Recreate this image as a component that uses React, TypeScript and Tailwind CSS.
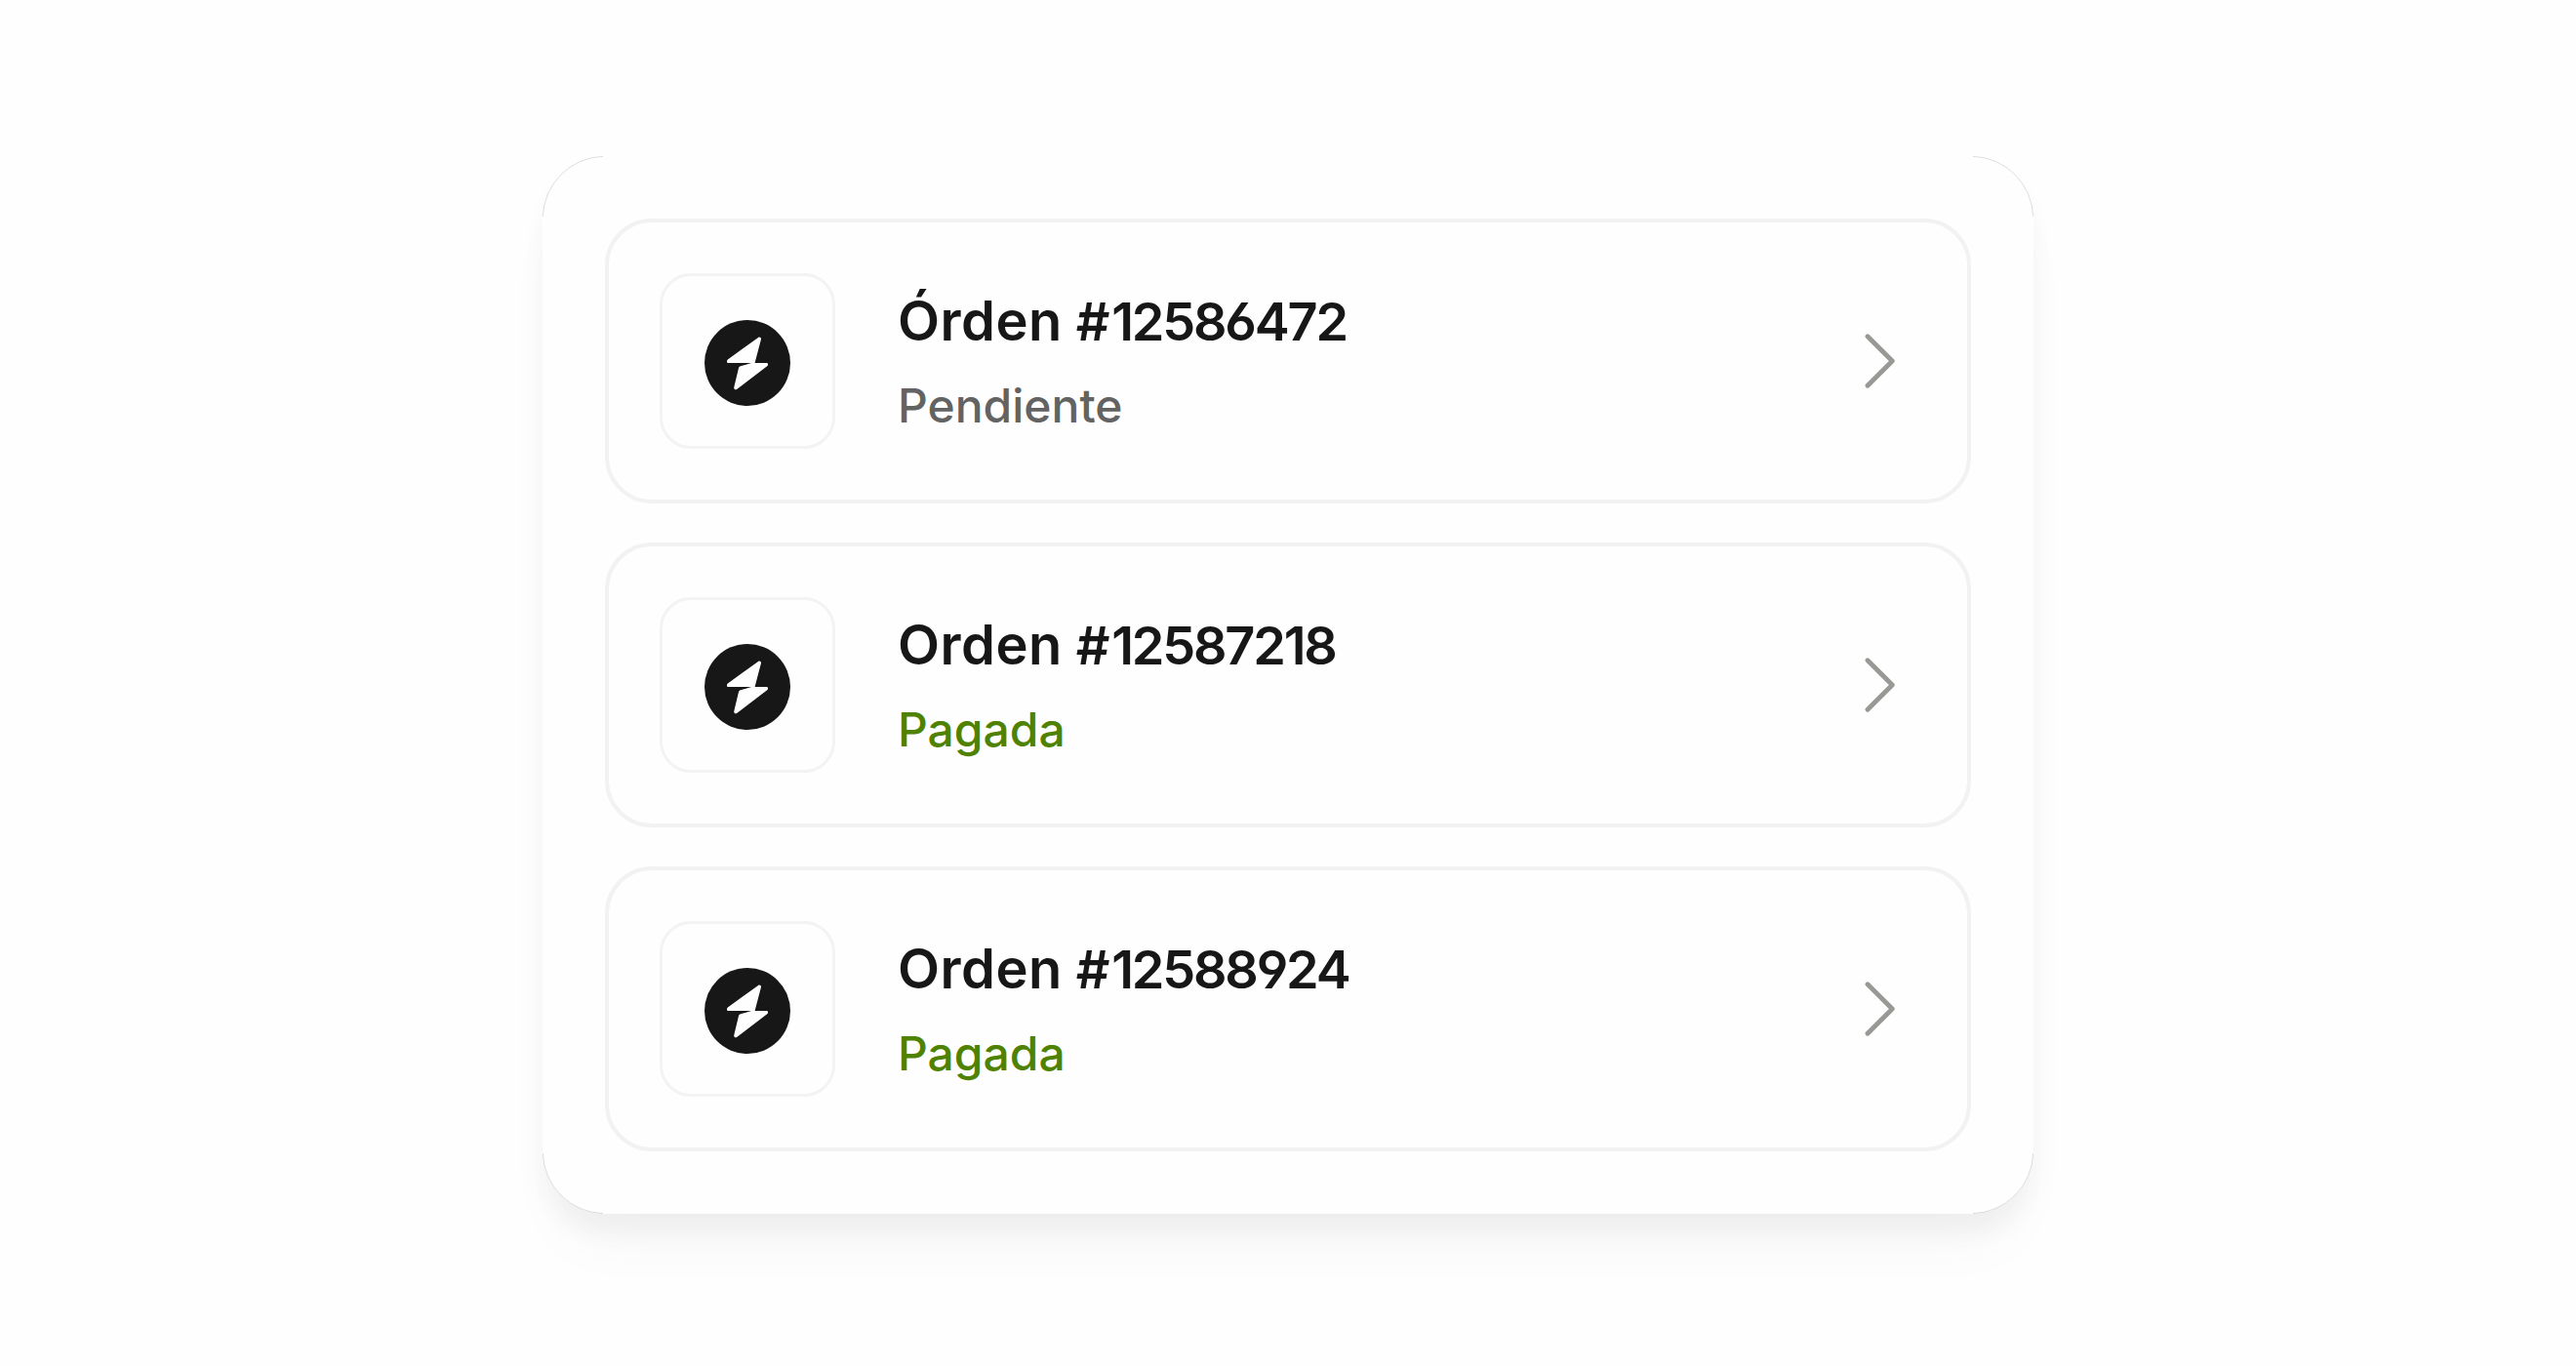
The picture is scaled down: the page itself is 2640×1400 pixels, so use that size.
const orders = [
  { id: "12586472", label: "Órden", status: "Pendiente", paid: false },
  { id: "12587218", label: "Orden", status: "Pagada", paid: true },
  { id: "12588924", label: "Orden", status: "Pagada", paid: true },
];

const BoltLogo = () => (
  <svg viewBox="0 0 88 88" className="mt-1 size-[88px]" fill="none">
    <circle cx="44" cy="44" r="44" fill="#171717" />
    <path
      d="M55 17.9C56.6 16.8 58.4 17.9 57.9 20L51.6 44H64C65.3 44.2 65.5 46.2 64.2 47.3L33.4 70.7C31.6 72 29.8 70.8 30.3 68.7L34.9 49.6C35.2 48.3 35.8 47.7 37 47.3L48 44H24.4C22.7 44 22.5 41.6 23.8 40.6Z"
      fill="#fefefe"
    />
  </svg>
);

const Chevron = () => (
  <svg viewBox="0 0 32 60" className="mr-[22px] h-[60px] w-8" fill="none">
    <path d="M4 4.7L29.3 30L4 55.3" stroke="#979995" strokeWidth="4.8" strokeLinecap="round" strokeLinejoin="round" />
  </svg>
);

// Hairline that follows one rounded corner of the panel
const Corner = ({ className }: { className: string }) => (
  <svg viewBox="0 0 64 64" className={`absolute size-16 ${className}`} fill="none">
    <path d="M0.3 62A63.7 63.7 0 0 1 62 0.3" stroke="#000" strokeOpacity="0.22" strokeWidth="0.6" />
  </svg>
);

const OrderRow = ({ order }: { order: (typeof orders)[number] }) => (
  <li className="flex h-[292px] items-center rounded-[48px] border-4 border-[#f2f2f2] px-[52px]">
    <div className="flex size-[180px] shrink-0 items-center justify-center rounded-[32px] border-[3px] border-[#f3f3f3]">
      <BoltLogo />
    </div>
    <div className="ml-16 flex-1 pt-1">
      <h3 className="flex items-baseline text-[54px] leading-[84px] font-semibold text-[#171717] [font-feature-settings:'cv03','cv04']">
        <span className="mr-3.5 text-[56px] tracking-[0.5px]">{order.label}</span>
        <span className="tracking-[1.5px]">#</span>
        <span className="tracking-[-2.2px]">{order.id}</span>
      </h3>
      <p className={`mt-0.5 text-5xl leading-[84px] font-medium ${order.paid ? "text-[#4f8200]" : "text-[#636363]"}`}>
        {order.status}
      </p>
    </div>
    <Chevron />
  </li>
);

const App = () => {
  return (
    <main className="flex h-[1400px] w-[2640px] justify-center overflow-hidden bg-[#fefefe] pt-40 font-['Inter',sans-serif]">
      <section className="relative h-[1084px] w-[1528px] rounded-[64px] bg-[#fefefe] p-16 shadow-[0_20px_24px_rgba(0,0,0,0.04),0_44px_64px_-16px_rgba(0,0,0,0.035)]">
        <ul className="flex flex-col gap-10">
          {orders.map((order) => (
            <OrderRow key={order.id} order={order} />
          ))}
        </ul>
        <Corner className="top-0 left-0" />
        <Corner className="top-0 right-0 rotate-90" />
        <Corner className="right-0 bottom-0 rotate-180" />
        <Corner className="bottom-0 left-0 -rotate-90" />
      </section>
    </main>
  );
};

export default App;
